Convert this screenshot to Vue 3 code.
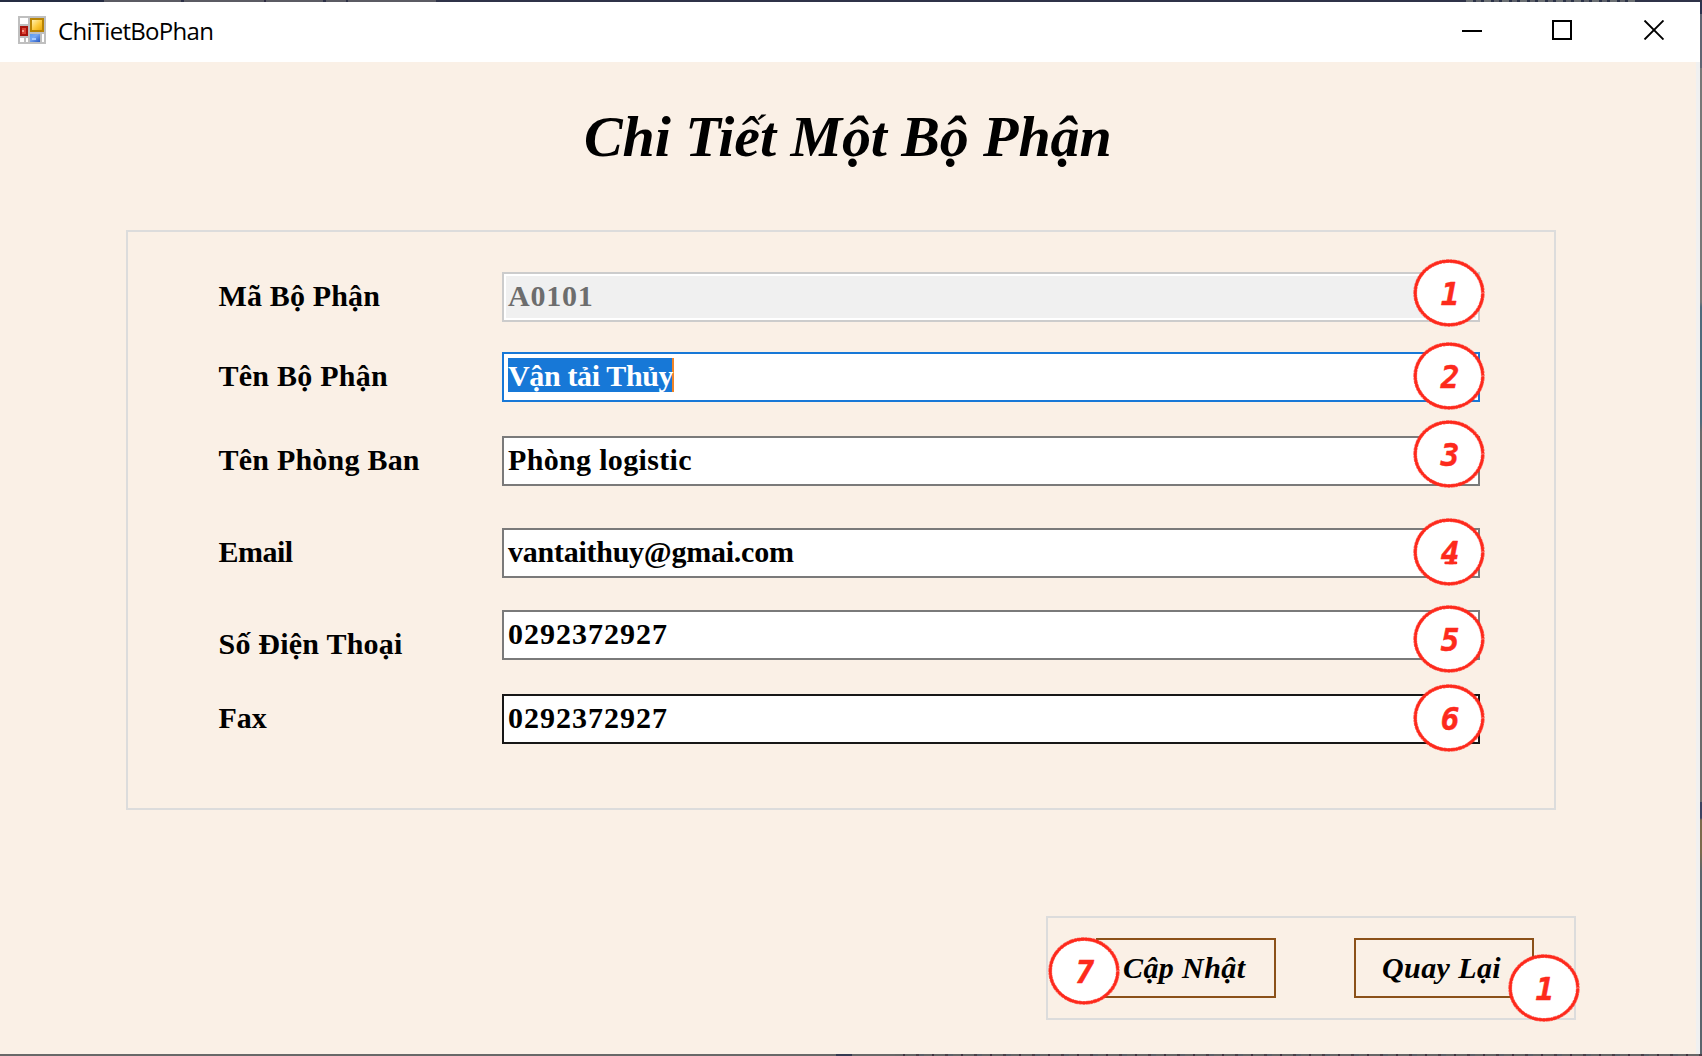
<script setup>
import { h } from 'vue'

const rows = [
  { label: 'Mã Bộ Phận', ls: 0.15, value: 'A0101', vs: 0.8, gap: 40, state: 'disabled', n: 1, cy: 21 },
  { label: 'Tên Bộ Phận', ls: 0.25, value: 'Vận tải Thủy', vs: -0.36, gap: 30, state: 'focused', n: 2, cy: 24 },
  { label: 'Tên Phòng Ban', ls: 0.22, value: 'Phòng logistic', vs: 0.33, gap: 34, state: '', n: 3, cy: 18 },
  { label: 'Email', ls: -0.5, value: 'vantaithuy@gmai.com', vs: -0.25, gap: 42, state: '', n: 4, cy: 24 },
  { label: 'Số Điện Thoại', ls: 0.22, value: '0292372927', vs: 1, gap: 32, state: '', n: 5, cy: 29, low: true },
  { label: 'Fax', ls: -0.1, value: '0292372927', vs: 1, gap: 34, state: 'hovered', n: 6, cy: 24 }
]

const red = '#fd2a1c'

const Badge = ({ n }) =>
  h('svg', { width: 72, height: 68, viewBox: '0 0 72 68' }, [
    h('ellipse', { cx: 36, cy: 34, rx: 33.8, ry: 31.9, fill: '#fff' }),
    h('ellipse', { cx: 36, cy: 34, rx: 33.8, ry: 31.9, fill: 'none', stroke: red, 'stroke-width': 2.6, pathLength: 400, 'stroke-dasharray': '397.6 2.4', 'stroke-dashoffset': -0.6 }),
    h('ellipse', { cx: 36, cy: 34, rx: 33.8, ry: 31.9, fill: 'none', stroke: red, 'stroke-width': 3.8, 'stroke-opacity': 0.7, pathLength: 400, 'stroke-dasharray': '7 1.2 4 0.8 9 1 5 1.5 6 1', 'stroke-dashoffset': -2 }),
    h('text', { x: 37, y: 45.9, 'text-anchor': 'middle', fill: red, stroke: red, 'stroke-width': 0.5, 'stroke-linejoin': 'round', 'font-family': '"DejaVu Sans Mono", monospace', 'font-size': 31, 'font-weight': 700, 'font-style': 'italic' }, String(n)),
    n === 4 ? h('path', { d: 'M32.6 44.9H43', stroke: red, 'stroke-width': 2.6, 'stroke-linecap': 'round' }) : null
  ])
Badge.props = ['n']
</script>

<template>
  <div class="desktop">
    <div class="strip-top"></div>
    <div class="middle">
      <div class="window">
        <header class="titlebar">
          <svg class="app-icon" width="28" height="28" viewBox="0 0 28 28" shape-rendering="crispEdges">
            <defs>
              <linearGradient id="gy" x1="0" y1="0" x2="1" y2="1"><stop offset="0" stop-color="#fff0b0" /><stop offset=".55" stop-color="#fcc93a" /><stop offset="1" stop-color="#e8a70c" /></linearGradient>
              <linearGradient id="gb" x1="0" y1="0" x2="1" y2="1"><stop offset="0" stop-color="#5c9cec" /><stop offset=".4" stop-color="#78a8f4" /><stop offset="1" stop-color="#2456c0" /></linearGradient>
            </defs>
            <rect width="28" height="28" fill="#bfbfbf" />
            <path fill="#fff" d="M2 2h8v6H2zM2 22h4v4H2zM8 22h2v4H8zM24 18h2v8h-2z" />
            <rect x="2" y="10" width="8" height="10" fill="#a8140c" />
            <rect x="4" y="12" width="4" height="6" fill="#dc4436" />
            <rect x="4" y="14" width="2" height="2" fill="#f4a090" />
            <rect x="12" y="2" width="14" height="14" fill="#b88404" />
            <rect x="14" y="4" width="10" height="10" fill="url(#gy)" />
            <rect x="12" y="18" width="10" height="8" fill="url(#gb)" />
            <rect x="14" y="22" width="4" height="2" fill="#a8ccff" />
          </svg>
          <span class="caption">ChiTietBoPhan</span>
          <svg class="controls" width="202" height="20" viewBox="0 0 202 20">
            <path d="M0 11H20M91 1H109V19H91Z" fill="none" stroke="#000" stroke-width="2" shape-rendering="crispEdges" />
            <path d="M182.500 .5L201.500 19.500M201.500 .5L182.500 19.500" stroke="#000" stroke-width="1.900" />
          </svg>
        </header>

        <main class="client">
          <h1>Chi Tiết Một Bộ Phận</h1>

          <section class="panel">
            <div v-for="r in rows" :key="r.n" class="row" :style="{ marginTop: r.gap + 'px' }">
              <label :class="{ low: r.low }" :style="{ letterSpacing: r.ls + 'px' }">{{ r.label }}</label>
              <div class="field">
                <div class="box" :class="r.state">
                  <span class="value" :style="{ letterSpacing: r.vs + 'px' }">{{ r.value }}</span>
                </div>
                <Badge class="badge" :n="r.n" :style="{ top: r.cy - 34 + 'px' }" />
              </div>
            </div>
          </section>

          <section class="actions">
            <button class="update">Cập Nhật<Badge class="badge" :n="7" /></button>
            <button class="back">Quay Lại<Badge class="badge" :n="1" /></button>
          </section>
        </main>
      </div>
      <div class="strip-right"></div>
    </div>
    <div class="strip-bottom"></div>
  </div>
</template>

<style>
body {
  margin: 0;
  overflow: hidden;
}
</style>

<style scoped>
.desktop {
  width: 1702px;
  height: 1056px;
  display: flex;
  flex-direction: column;
  font-family: "Liberation Serif", serif;
  color: #000;
}
.strip-top {
  height: 2px;
  background:
    repeating-linear-gradient(90deg, #6b6f73 0 7px, #2b3247 7px 10px, #5d6068 10px 15px, #2b3247 15px 18px) 1466px 0 / 170px 2px no-repeat,
    linear-gradient(90deg, #252c42 0 104px, #5b5b63 104px 181px, #2d3046 181px 184px, #5b5b63 184px 264px, #2d2a40 264px 266px, #5b5b63 266px 323px, #2d3046 323px 326px, #5b5b63 326px 346px, #2d3046 346px 348px, #5b5b63 348px 436px, #2f3348 436px 100%);
}
.middle {
  flex: 1;
  display: flex;
}
.window {
  width: 1700px;
  display: flex;
  flex-direction: column;
}
.strip-right {
  width: 2px;
  background: linear-gradient(#2c3350 0 12px, #5f6472 12px 66px, #777 66px 300px, #4f6a7c 305px 420px, #6b6b6b 430px 800px, #3c4260 800px 816px, #7c6a4c 818px 850px, #5a656d 870px);
}
.strip-bottom {
  height: 2px;
  background:
    linear-gradient(#343a50, #343a50) 836px 0 / 16px 2px no-repeat,
    repeating-linear-gradient(90deg, #666 0 8px, #3f3340 8px 10px, #666 10px 21px, #4a4048 21px 24px, #5b6068 24px 29px) 895px 0 / 807px 2px no-repeat,
    #686868;
}
.titlebar {
  height: 60px;
  background: #fff;
  display: flex;
  align-items: center;
  box-sizing: border-box;
  padding: 0 36px 4px 18px;
}
.caption {
  margin: 2px 0 0 12px;
  font: 24px/32px "Open Sans", "Noto Sans", sans-serif;
  letter-spacing: -0.7px;
}
.controls {
  margin: 0 0 0 auto;
}
.client {
  flex: 1;
  background: #faf0e6;
  border-right: 4px solid #f0f0f0;
  display: flex;
  flex-direction: column;
}
h1 {
  margin: 42px 0 0 584px;
  font-size: 58px;
  line-height: 66px;
  font-weight: 700;
  font-style: italic;
  letter-spacing: -0.1px;
  white-space: nowrap;
}
.panel {
  box-sizing: border-box;
  width: 1430px;
  height: 580px;
  margin: 60px 0 0 126px;
  border: 2px solid #dcdcdc;
  display: flex;
  flex-direction: column;
}
.row {
  height: 50px;
  display: flex;
  padding-left: 90.5px;
}
label {
  width: 283.5px;
  padding-top: 6px;
  font-size: 30px;
  line-height: 36px;
  font-weight: 700;
  white-space: nowrap;
}
label.low {
  padding-top: 16px;
}
.field {
  position: relative;
  width: 978px;
}
.box {
  box-sizing: border-box;
  height: 50px;
  padding: 4px;
  border: 2px solid #7a7a7a;
  background: #fff;
}
.value {
  display: inline-block;
  vertical-align: top;
  box-sizing: border-box;
  height: 34px;
  font-size: 30px;
  line-height: 36px;
  font-weight: 700;
  white-space: nowrap;
}
.box.disabled {
  border-color: #ccc;
  background: #f0f0f0;
  box-shadow: inset 0 0 0 2px #fff;
  color: #6d6d6d;
}
.box.focused {
  border-color: #1778d7;
}
.box.focused .value {
  width: 166px;
  background: #1778d7;
  border-right: 2px solid #f08428;
  color: #fff;
}
.box.hovered {
  border-color: #171717;
}
.badge {
  position: absolute;
  left: 911px;
  display: block;
}
.actions {
  box-sizing: border-box;
  width: 530px;
  height: 104px;
  margin: 106px 0 0 1046px;
  padding: 20px 0 0 48px;
  border: 2px solid #dcdcdc;
  display: flex;
  gap: 78px;
}
button {
  position: relative;
  box-sizing: border-box;
  width: 180px;
  height: 60px;
  border: 2px solid #8b5119;
  background: transparent;
  padding: 0;
  font: italic 700 30px/36px "Liberation Serif", serif;
  letter-spacing: 0.4px;
  color: #000;
  text-align: left;
  white-space: nowrap;
}
.update {
  padding-left: 25px;
}
.back {
  padding-left: 26px;
}
.update .badge {
  left: -50px;
  top: -3px;
}
.back .badge {
  left: 152px;
  top: 14px;
}
</style>
